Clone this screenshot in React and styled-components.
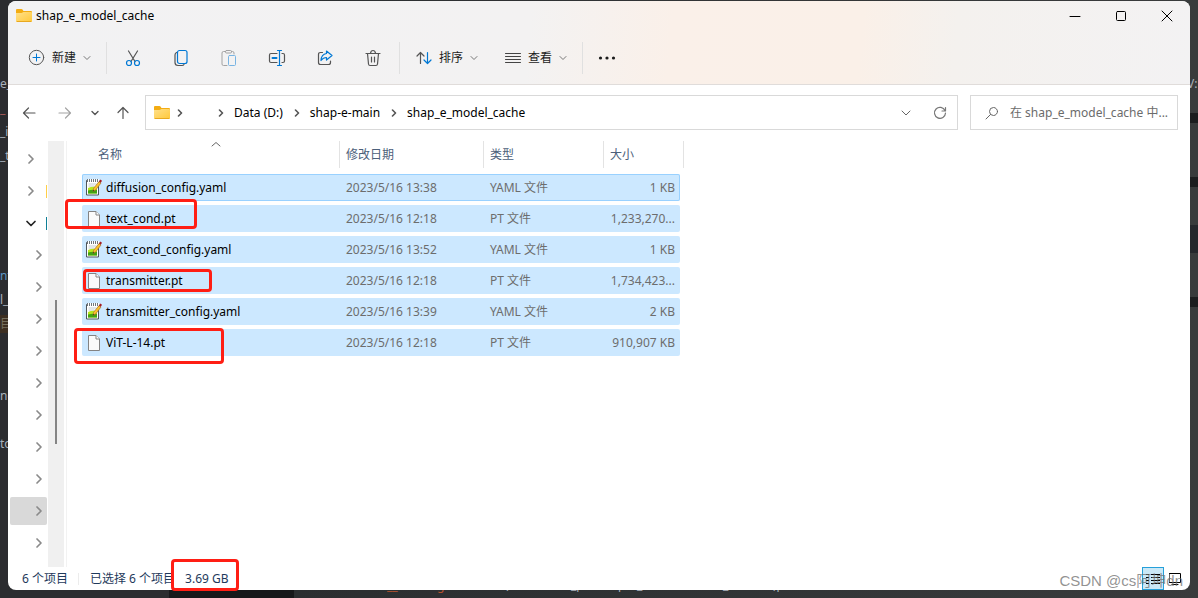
import styled, { createGlobalStyle, css } from 'styled-components';

const GlobalStyle = createGlobalStyle`
  * {
    box-sizing: border-box;
  }

  body {
    margin: 0;
    background: #2b2c2f;
    font-family: 'Noto Sans', 'Noto Sans CJK SC', sans-serif;
    font-size: 12px;
    line-height: 16px;
    color: #000;
  }

  button,
  input {
    margin: 0;
    padding: 0;
    border: 0;
    background: none;
    color: inherit;
    font: inherit;
  }

  svg {
    display: block;
    flex: none;
  }
`;

const Desktop = styled.div`
  position: relative;
  display: flex;
  min-height: 100vh;
  padding: 1px 8px 8px;
  overflow: hidden;
  background:
    linear-gradient(#17181a, #17181a) 169px 100% / 125px 12px no-repeat,
    linear-gradient(90deg, #2b2c2f 169px, #2b2e30 294px, #393b3c);
`;

const Snippet = styled.span`
  position: absolute;
  top: ${p => p.$top}px;
  left: ${p => p.$left || 0}px;
  line-height: 18px;
  color: ${p => p.$color || '#a9b0bb'};
  background: ${p => p.$back || 'none'};
  white-space: pre;
`;

const EdgeMark = styled.span`
  position: absolute;
  right: 0;
  top: ${p => p.$top}px;
  width: 8px;
  height: ${p => p.$height}px;
  background: ${p => p.$color};
`;

const Window = styled.main`
  position: relative;
  flex: 1;
  display: flex;
  flex-direction: column;
  min-width: 0;
  border-radius: 8px;
  background: #fff;
`;

const Header = styled.header`
  border-bottom: 1px solid #e0dcda;
  border-radius: 8px 8px 0 0;
  background: linear-gradient(
    95deg,
    #f2f2f3 0%,
    #f3f2f2 44%,
    #faf0e9 56%,
    #faf0e8 72%,
    #f4f1ee 80%,
    #f3f2f3 100%
  );
`;

const TitleBar = styled.div`
  display: flex;
  align-items: center;
  height: 30px;
  padding-left: 8px;
`;

const Title = styled.h1`
  flex: 1;
  margin: 0 0 0 4px;
  font-size: 12px;
  font-weight: 400;
`;

const WindowButton = styled.button`
  display: grid;
  place-items: center;
  width: 46px;
  height: 30px;
`;

const Toolbar = styled.div`
  display: flex;
  align-items: center;
  height: 53px;
  padding-left: 20px;
`;

const ToolGroup = styled.div`
  display: flex;
  padding: 0 2px;
`;

const ToolButton = styled.button`
  display: grid;
  place-items: center;
  width: 48px;
  height: 32px;
  opacity: ${p => (p.disabled ? 0.5 : 1)};
`;

const MenuButton = styled.button`
  display: flex;
  align-items: center;
  gap: 7px;
  width: ${p => p.$width}px;
  height: 32px;
  padding-left: ${p => p.$indent || 0}px;
  color: #1b1b1b;
`;

const Divider = styled.span`
  width: 1px;
  height: 32px;
  background: #e0e0e0;
`;

const Navigation = styled.nav`
  display: flex;
  align-items: center;
  height: 55px;
  padding: 0 12px 0 3px;
`;

const NavButton = styled.button`
  display: grid;
  place-items: center;
  width: ${p => p.$width}px;
  height: 32px;
`;

const AddressBar = styled.div`
  flex: 1;
  display: flex;
  align-items: center;
  height: 35px;
  margin: 0 12px 0 6px;
  padding-left: 8px;
  border: 1px solid #d9d9d9;
`;

const Crumb = styled.a`
  min-width: 21px;
  padding: 0 4px 0 3px;
  color: #000;
  text-decoration: none;
  white-space: nowrap;
`;

const CrumbArrow = styled.span`
  display: grid;
  place-items: center;
  width: 20px;
`;

const AddressTools = styled.div`
  display: flex;
  margin-left: auto;
`;

const SearchBox = styled.label`
  display: flex;
  align-items: center;
  gap: 11px;
  width: 208px;
  height: 35px;
  padding-left: 14px;
  border: 1px solid #d9d9d9;
`;

const SearchInput = styled.input`
  flex: 1;
  min-width: 0;
  outline: none;

  &::placeholder {
    color: #6b6b6b;
    opacity: 1;
  }
`;

const Content = styled.div`
  flex: 1;
  display: flex;
  padding-top: 1px;
`;

const Tree = styled.ul`
  width: 40px;
  margin: 0;
  padding: 2px 1px 0 2px;
  list-style: none;
`;

const TreeItem = styled.li`
  display: flex;
  align-items: center;
  justify-content: space-between;
  height: 28px;
  margin: 2px 0 4px;
  padding-left: ${p => (p.$nested ? 23 : 15)}px;
  border-radius: 2px;
  background: ${p => (p.$selected ? '#d9d9d9' : 'none')};
`;

const TreeToggle = styled.button`
  display: grid;
  place-items: center;
  width: 12px;
  height: 16px;
`;

const TreeIcon = styled.span`
  width: 1px;
  height: 13px;
  background: ${p => p.$color};
`;

const Scrollbar = styled.div`
  width: 16px;
  padding: 159px 7px 0;
  background: #f0f0f0;
`;

const Thumb = styled.div`
  width: 2px;
  height: 144px;
  background: #858585;
`;

const FilePane = styled.section`
  flex: 1;
  margin-left: 2px;
  padding-left: 15px;
  border-left: 1px solid #f2f2f2;
`;

const FileTable = styled.table`
  display: block;
  width: 602px;
`;

const TableHead = styled.thead`
  display: block;
  margin-bottom: 6px;
`;

const TableBody = styled.tbody`
  display: grid;
  gap: 4px;
  padding-right: 4px;
`;

const columns = css`
  display: grid;
  grid-template-columns: 258px 144px 120px 1fr;
`;

const HeadRow = styled.tr`
  ${columns}
`;

const HeadCell = styled.th`
  position: relative;
  height: 27px;
  padding: 6px 6px 5px;
  padding-left: ${p => (p.$first ? 16 : 6)}px;
  border-right: 1px solid #e3e3e3;
  color: #4c607a;
  font-weight: 400;
  text-align: left;
`;

const SortMark = styled.span`
  position: absolute;
  top: 0;
  left: 50%;
`;

const FileRow = styled.tr`
  ${columns}
  height: 27px;
  border-radius: 2px;
  background: #cce8ff;
  box-shadow: ${p => (p.$focused ? 'inset 0 0 0 1px #99d1ff' : 'none')};
`;

const FileCell = styled.td`
  padding: 6px 6px 5px;
  color: #6d6d6d;
  white-space: nowrap;
`;

const SizeCell = styled(FileCell)`
  padding-right: 5px;
  text-align: right;
`;

const NameCell = styled.td`
  position: relative;
  display: flex;
  align-items: center;
  gap: 4px;
  padding: 0 4px;
`;

const Marker = styled.span`
  position: absolute;
  z-index: 1;
  top: ${p => p.$top}px;
  left: ${p => p.$left}px;
  width: ${p => p.$width}px;
  height: ${p => p.$height}px;
  border: 3px solid #ff1e14;
  border-radius: 4px;
  pointer-events: none;
`;

const StatusBar = styled.footer`
  display: flex;
  align-items: center;
  height: 23px;
  padding: 0 4px 0 14px;
  color: #1e395b;
`;

const StatusDivider = styled.span`
  width: 1px;
  height: 12px;
  margin: 0 11px 0 10px;
  background: #ececec;
`;

const SelectedSize = styled.span`
  position: relative;
  flex: 1;
  margin-left: 10px;
`;

const ViewButton = styled.button`
  display: grid;
  place-items: center;
  width: 22px;
  height: 23px;
  border: 1px solid ${p => (p.$active ? '#26a0da' : 'transparent')};
  background: ${p => (p.$active ? '#cbe8f6' : 'none')};
`;

const Watermark = styled.span`
  position: absolute;
  z-index: 2;
  right: 7px;
  bottom: 0;
  color: rgba(110, 110, 110, 0.75);
  font: 15px/18px 'Liberation Sans', 'Noto Sans CJK SC', sans-serif;
`;

const Icon = ({ size = 16, color = '#555', children }) => (
  <svg
    width={size}
    height={size}
    viewBox={`0 0 ${size} ${size}`}
    fill="none"
    stroke={color}
    strokeLinecap="round"
    strokeLinejoin="round"
    aria-hidden="true"
  >
    {children}
  </svg>
);

const blue = '#0078d4';

const FolderIcon = () => (
  <svg width="16" height="16" viewBox="0 0 16 16" aria-hidden="true">
    <defs>
      <linearGradient id="folder" x1="0" y1="0" x2="1" y2="1">
        <stop offset="0" stopColor="#ffe08a" />
        <stop offset="1" stopColor="#ffc83a" />
      </linearGradient>
    </defs>
    <path d="M0 2q0-1 1-1h4.500q.6 0 1 .5L7.500 3H15q1 0 1 1v4H0z" fill="#f3ac12" />
    <path d="M0 5h5.500q.6 0 1-.4L7.500 4H15q1 0 1 1v8q0 1-1 1H1q-1 0-1-1z" fill="url(#folder)" />
    <path d="M.7 13.500h14.600" stroke="#e8a820" />
  </svg>
);

const ChevronDown = ({ color = '#777', width = 1 }) => (
  <Icon size={8} color={color}>
    <path d="M1 2.500l3 3 3-3" strokeWidth={width} />
  </Icon>
);

const ChevronRight = ({ color = '#555' }) => (
  <Icon size={8} color={color}>
    <path d="M2.500 1l3 3-3 3" strokeWidth="1.6" />
  </Icon>
);

const TreeChevron = ({ open }) => (
  <Icon size={12} color={open ? '#222' : '#8a8a8a'}>
    <path d={open ? 'M2 4.500l4 4 4-4' : 'M4 2l4 4-4 4'} strokeWidth="1.7" />
  </Icon>
);

const NewIcon = () => (
  <Icon size={17}>
    <circle cx="8.500" cy="8.500" r="7.200" />
    <path d="M8.500 5v7M5 8.500h7" stroke={blue} />
  </Icon>
);

const CutIcon = () => (
  <Icon size={18}>
    <path d="M4.500 2l6.500 10.500M13.500 2L7 12.500" strokeWidth="1.200" />
    <circle cx="5" cy="14" r="2.500" stroke={blue} strokeWidth="1.200" />
    <circle cx="13" cy="14" r="2.500" stroke={blue} strokeWidth="1.200" />
  </Icon>
);

const CopyIcon = () => (
  <Icon size={18}>
    <path d="M4.500 3.500C3.500 4 3 4.800 3 6v7.500q0 3 3 3h4c1 0 1.600-.3 2-1" strokeWidth="1.200" />
    <rect x="5.500" y="1.500" width="9.500" height="13" rx="2" stroke={blue} strokeWidth="1.200" />
  </Icon>
);

const PasteIcon = () => (
  <Icon size={18}>
    <path d="M5.500 2.500h-2q-1.500 0-1.500 1.500v11q0 1.500 1.500 1.500H7M11.500 2.500h1Q14 2.500 14 4v1" />
    <rect x="5.500" y="1.500" width="6" height="2.500" rx="1" />
    <rect x="8.500" y="6.500" width="7" height="10" rx="1" stroke={blue} />
  </Icon>
);

const RenameIcon = () => (
  <Icon size={18}>
    <path d="M9 4.500H3Q1.500 4.500 1.500 6v6q0 1.500 1.500 1.500h6M14 4.500h1q1.500 0 1.500 1.500v6q0 1.500-1.500 1.500h-1" strokeWidth="1.200" />
    <path d="M9.500 1.500h4M9.500 16.500h4M11.500 1.500v15" stroke={blue} strokeWidth="1.200" />
    <path d="M4.500 9h4" stroke={blue} strokeWidth="2" />
  </Icon>
);

const ShareIcon = () => (
  <Icon size={18}>
    <path d="M6.500 3.500h-2q-2 0-2 2v8q0 2 2 2h8q2 0 2-2V12" strokeWidth="1.200" />
    <path d="M10.500 2l5.500 4.500-5.500 4.500V8.500C8 8.500 6.500 9.500 5 11.500c.2-4 2-6.500 5.500-7z" stroke={blue} strokeWidth="1.200" />
  </Icon>
);

const DeleteIcon = () => (
  <Icon size={18}>
    <path d="M2 4.500h14M6.500 4.200Q7 1.500 9 1.500t2.500 2.700M3.500 4.500l1 10.500q.2 1.500 1.500 1.500h6q1.300 0 1.500-1.500l1-10.500M7.500 8v5M10.500 8v5" strokeWidth="1.200" />
  </Icon>
);

const SortIcon = () => (
  <Icon>
    <path d="M4.500 13.500V2.500M1 6l3.500-3.500L8 6" strokeWidth="1.200" />
    <path d="M11.500 2.500v11M8 10l3.500 3.500L15 10" stroke={blue} strokeWidth="1.200" />
  </Icon>
);

const ViewIcon = () => (
  <Icon color="#444">
    <path d="M.5 3.500h15M.5 6.500h15M.5 9.500h15M.5 12.500h15" />
  </Icon>
);

const MoreIcon = () => (
  <svg width="18" height="4" viewBox="0 0 18 4" fill="#1b1b1b" aria-hidden="true">
    <circle cx="2.500" cy="2" r="1.600" />
    <circle cx="9" cy="2" r="1.600" />
    <circle cx="15.500" cy="2" r="1.600" />
  </svg>
);

const NotepadIcon = () => (
  <svg width="16" height="17" viewBox="0 0 16 17" aria-hidden="true">
    <path d="M.5 1.500h12v14.500H.5z" fill="#fff" stroke="#4f565c" />
    <path d="M1 1.500h12" stroke="#fff" strokeWidth="3" />
    <path d="M1 1.500h12" stroke="#6f767c" strokeWidth="3" strokeDasharray="1 1" />
    <path d="M2.500 5h8M2.500 7h6" stroke="#c4ccd0" />
    <path d="M2 9q4-2 9-1v6.500H2z" fill="#b5e61d" />
    <path d="M2 11.500q4-1 9-.5v3.500H2z" fill="#41a315" />
    <path d="M7 12.500l.6-3.200L13 2.500l2 1.500-5.300 7z" fill="#fbc02d" stroke="#9a6420" strokeWidth=".6" />
    <path d="M12.900 2.500L14.200.500l1.800 1.200-1.200 2z" fill="#a51c24" />
    <path d="M7 12.500l.3-1.500 1.100.7z" fill="#222" />
  </svg>
);

const BlankFileIcon = () => (
  <svg width="16" height="16" viewBox="0 0 16 16" aria-hidden="true">
    <path d="M2.500.500H10L13.500 4v11.500h-11z" fill="#fafafa" stroke="#838383" />
    <path d="M10 .500V4h3.500" fill="#fff" stroke="#838383" />
  </svg>
);

const files = [
  { name: 'diffusion_config.yaml', date: '2023/5/16 13:38', type: 'YAML 文件', size: '1 KB', focused: true },
  { name: 'text_cond.pt', date: '2023/5/16 12:18', type: 'PT 文件', size: '1,233,270...', marker: [-6, -17, 132, 30] },
  { name: 'text_cond_config.yaml', date: '2023/5/16 13:52', type: 'YAML 文件', size: '1 KB' },
  { name: 'transmitter.pt', date: '2023/5/16 12:18', type: 'PT 文件', size: '1,734,423...', marker: [2, 1, 129, 23] },
  { name: 'transmitter_config.yaml', date: '2023/5/16 13:39', type: 'YAML 文件', size: '2 KB' },
  { name: 'ViT-L-14.pt', date: '2023/5/16 12:18', type: 'PT 文件', size: '910,907 KB', marker: [-1, -8, 150, 36] },
];

const treeItems = [
  {},
  { icon: '#ffcf48' },
  { icon: '#0f7f96', open: true },
  ...Array.from({ length: 10 }, (_, i) => ({ nested: true, selected: i === 8 })),
];

const snippets = [
  { top: 75, text: 'e_' },
  { top: 100, text: '_', color: '#b05c5c' },
  { top: 123, text: '_i' },
  { top: 147, text: '_t' },
  { top: 267, text: 'nf', color: '#5c94c4' },
  { top: 291, text: 'l_' },
  { top: 315, text: '目', color: '#77705f', back: '#3d2f22' },
  { top: 387, text: 'nd' },
  { top: 435, text: 'to' },
  { top: 75, left: 1187, text: 'V:' },
  { top: 577, left: 387, text: '__', color: '#b5502d' },
  { top: 577, left: 437, text: 'g', color: '#b5502d' },
  { top: 576, left: 505, text: '(' },
  { top: 576, left: 571, text: '_p' },
  { top: 576, left: 618, text: 'p' },
  { top: 576, left: 637, text: '_' },
  { top: 576, left: 723, text: '_' },
  { top: 576, left: 773, text: ')p' },
];

const Entry = ({ file }) => (
  <FileRow $focused={file.focused}>
    <NameCell>
      {file.name.endsWith('.yaml') ? <NotepadIcon /> : <BlankFileIcon />}
      {file.name}
      {file.marker && (
        <Marker
          $top={file.marker[0]}
          $left={file.marker[1]}
          $width={file.marker[2]}
          $height={file.marker[3]}
        />
      )}
    </NameCell>
    <FileCell>{file.date}</FileCell>
    <FileCell>{file.type}</FileCell>
    <SizeCell>{file.size}</SizeCell>
  </FileRow>
);

const App = () => {
  return (
    <Desktop>
      <GlobalStyle />
      {snippets.map(s => (
        <Snippet key={`${s.top}-${s.left}`} $top={s.top} $left={s.left} $color={s.color} $back={s.back} aria-hidden="true">
          {s.text}
        </Snippet>
      ))}
      <EdgeMark $top={113} $height={10} $color="#1c1d1f" />
      <EdgeMark $top={177} $height={10} $color="#1c1d1f" />
      <EdgeMark $top={225} $height={28} $color="#25272c" />
      <EdgeMark $top={297} $height={10} $color="#1c1d1f" />

      <Window>
        <Header>
          <TitleBar>
            <FolderIcon />
            <Title>shap_e_model_cache</Title>
            <WindowButton aria-label="最小化">
              <Icon size={12} color="#000">
                <path d="M1 6.500h10" />
              </Icon>
            </WindowButton>
            <WindowButton aria-label="最大化">
              <Icon size={12} color="#000">
                <rect x="1.500" y="1.500" width="9" height="9" rx="1" />
              </Icon>
            </WindowButton>
            <WindowButton aria-label="关闭">
              <Icon size={12} color="#000">
                <path d="M1 1l10 10M11 1L1 11" />
              </Icon>
            </WindowButton>
          </TitleBar>

          <Toolbar>
            <MenuButton $width={78}>
              <NewIcon />
              新建
              <ChevronDown />
            </MenuButton>
            <Divider />
            <ToolGroup>
              <ToolButton aria-label="剪切"><CutIcon /></ToolButton>
              <ToolButton aria-label="复制"><CopyIcon /></ToolButton>
              <ToolButton aria-label="粘贴" disabled><PasteIcon /></ToolButton>
              <ToolButton aria-label="重命名"><RenameIcon /></ToolButton>
              <ToolButton aria-label="共享"><ShareIcon /></ToolButton>
              <ToolButton aria-label="删除"><DeleteIcon /></ToolButton>
            </ToolGroup>
            <Divider />
            <MenuButton $width={89} $indent={16}>
              <SortIcon />
              排序
              <ChevronDown />
            </MenuButton>
            <MenuButton $width={93} $indent={16}>
              <ViewIcon />
              查看
              <ChevronDown />
            </MenuButton>
            <Divider />
            <ToolButton aria-label="更多"><MoreIcon /></ToolButton>
          </Toolbar>
        </Header>

        <Navigation>
          <NavButton $width={36} aria-label="后退">
            <Icon><path d="M14 8H2.500M7.500 3l-5 5 5 5" strokeWidth="1.200" /></Icon>
          </NavButton>
          <NavButton $width={36} aria-label="前进">
            <Icon color="#a3a3a3"><path d="M2 8h11.500M8.500 3l5 5-5 5" strokeWidth="1.200" /></Icon>
          </NavButton>
          <NavButton $width={24} aria-label="最近">
            <ChevronDown color="#555" width={1.4} />
          </NavButton>
          <NavButton $width={32} aria-label="向上">
            <Icon><path d="M8 13.500v-11M3 7.500l5-5 5 5" strokeWidth="1.200" /></Icon>
          </NavButton>
          <AddressBar>
            <FolderIcon />
            <CrumbArrow><ChevronRight /></CrumbArrow>
            <Crumb href="#pc" aria-label="此电脑" />
            <CrumbArrow><ChevronRight /></CrumbArrow>
            <Crumb href="#data">Data (D:)</Crumb>
            <CrumbArrow><ChevronRight /></CrumbArrow>
            <Crumb href="#main">shap-e-main</Crumb>
            <CrumbArrow><ChevronRight /></CrumbArrow>
            <Crumb href="#cache">shap_e_model_cache</Crumb>
            <AddressTools>
              <NavButton $width={34} aria-label="历史记录">
                <Icon size={10} color="#666"><path d="M1 3l4 4 4-4" /></Icon>
              </NavButton>
              <NavButton $width={34} aria-label="刷新">
                <Icon size={14} color="#777">
                  <path d="M12 4.500A5.500 5.500 0 1 0 12.500 7M12.500 1.500v3.500H9" strokeWidth="1.200" />
                </Icon>
              </NavButton>
            </AddressTools>
          </AddressBar>
          <SearchBox>
            <Icon size={14} color="#666">
              <circle cx="8.500" cy="5.500" r="4" />
              <path d="M5.500 8.500L1 13" />
            </Icon>
            <SearchInput type="text" aria-label="搜索" placeholder="在 shap_e_model_cache 中..." />
          </SearchBox>
        </Navigation>

        <Content>
          <Tree>
            {treeItems.map((item, i) => (
              <TreeItem key={i} $nested={item.nested} $selected={item.selected}>
                <TreeToggle aria-label="展开">
                  <TreeChevron open={item.open} />
                </TreeToggle>
                {item.icon && <TreeIcon $color={item.icon} />}
              </TreeItem>
            ))}
          </Tree>
          <Scrollbar>
            <Thumb />
          </Scrollbar>
          <FilePane>
            <FileTable>
              <TableHead>
                <HeadRow>
                  <HeadCell $first>
                    名称
                    <SortMark>
                      <Icon size={10} color="#666"><path d="M1 5l4-3.500L9 5" /></Icon>
                    </SortMark>
                  </HeadCell>
                  <HeadCell>修改日期</HeadCell>
                  <HeadCell>类型</HeadCell>
                  <HeadCell>大小</HeadCell>
                </HeadRow>
              </TableHead>
              <TableBody>
                {files.map(file => (
                  <Entry key={file.name} file={file} />
                ))}
              </TableBody>
            </FileTable>
          </FilePane>
        </Content>

        <StatusBar>
          <span>6 个项目</span>
          <StatusDivider />
          <span>已选择 6 个项目</span>
          <SelectedSize>
            3.69 GB
            <Marker $top={-12} $left={-14} $width={68} $height={32} />
          </SelectedSize>
          <ViewButton $active aria-label="详细信息">
            <Icon color="#000">
              <path d="M1 3.500h3M6 3.500h9M1 6.500h3M6 6.500h9M1 9.500h3M6 9.500h9M1 12.500h3M6 12.500h9" strokeLinecap="butt" />
            </Icon>
          </ViewButton>
          <ViewButton aria-label="大图标">
            <Icon size={12} color="#000">
              <rect x=".5" y=".5" width="11" height="9" />
              <path d="M3 11.500h6" />
            </Icon>
          </ViewButton>
        </StatusBar>
        <Watermark>CSDN @cs阿坤dn</Watermark>
      </Window>
    </Desktop>
  );
};

export default App;
